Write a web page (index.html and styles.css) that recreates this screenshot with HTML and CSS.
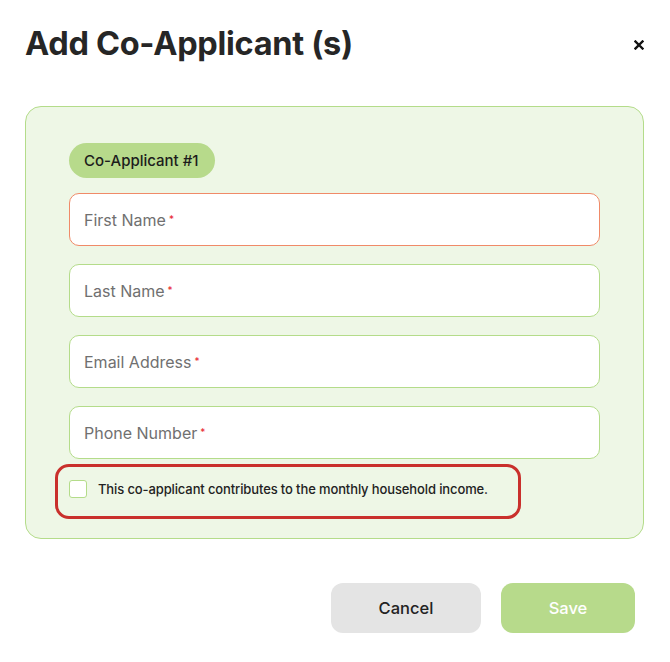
FILE: index.html
```html
<!DOCTYPE html>
<html>
<head>
<meta charset="utf-8">
<link rel="stylesheet" href="styles.css">
</head>
<body>
<div class="modal">
  <div class="header">
    <h1 class="title">Add Co-Applicant (s)</h1>
    <button class="close" aria-label="Close">
      <svg width="10" height="10" viewBox="0 0 10 10"><path d="M1.5 1.5 L8.5 8.5 M8.5 1.5 L1.5 8.5" stroke="#111" stroke-width="2.4" stroke-linecap="square"/></svg>
    </button>
  </div>
  <div class="card">
    <div class="badge">Co-Applicant #1</div>
    <div class="fields">
      <div class="field field-error"><span class="label">First Name</span><span class="req">*</span></div>
      <div class="field"><span class="label">Last Name</span><span class="req">*</span></div>
      <div class="field"><span class="label">Email Address</span><span class="req">*</span></div>
      <div class="field"><span class="label">Phone Number</span><span class="req">*</span></div>
    </div>
    <label class="check-row">
      <span class="checkbox"></span>
      <span class="check-text">This co-applicant contributes to the monthly household income.</span>
    </label>
  </div>
  <div class="actions">
    <button class="btn btn-cancel">Cancel</button>
    <button class="btn btn-save">Save</button>
  </div>
</div>
</body>
</html>
```
FILE: styles.css
```css
* { box-sizing: border-box; }
html, body { margin: 0; padding: 0; background: #fff; }
body { font-family: Inter, "Liberation Sans", sans-serif; color: #222; }
.modal { width: 670px; height: 662px; padding-top: 22px; }
.header { display: flex; align-items: center; justify-content: space-between; padding: 0 26px 0 25px; height: 44px; }
.title { margin: 0; font-size: 32.5px; line-height: 44px; font-weight: 700; color: #262626; letter-spacing: -0.3px; }
.close { border: 0; background: none; padding: 0; width: 10px; height: 10px; display: flex; margin-top: 2px; }
.card { margin: 40px 26px 0 25px; background: #eef7e6; border: 1px solid #b4dc8a; border-radius: 16px; padding: 36px 43px 19px 29px; }
.badge { display: inline-flex; align-items: center; height: 35px; padding: 0 16px 0 15px; margin-left: 14px; border-radius: 18px; background: #b7da8b; font-size: 15px; font-weight: 500; color: #1c1c1c; }
.fields { display: flex; flex-direction: column; gap: 18px; margin-top: 15px; margin-left: 14px; }
.field { height: 53px; background: #fff; border: 1px solid #b4dc8a; border-radius: 10px; display: flex; align-items: center; padding-left: 14px; }
.field-error { border-color: #f08a68; }
.label { font-size: 16px; color: #707070; }
.req { color: #e8232d; font-size: 10px; margin-left: 3px; position: relative; top: -1px; }
.check-row { display: inline-flex; align-items: center; margin-top: 5px; width: 466px; height: 55px; border: 3px solid #c9302c; border-radius: 14px; padding-left: 11px; padding-bottom: 6px; }
.checkbox { width: 18px; height: 18px; border: 1px solid #b4dc8a; border-radius: 3px; background: #fff; flex: none; }
.check-text { margin-left: 11px; font-size: 13px; font-weight: 500; color: #222; letter-spacing: -0.12px; }
.actions { display: flex; justify-content: flex-end; gap: 20px; margin-top: 44px; padding-right: 35px; }
.btn { height: 50px; border: 0; border-radius: 12px; font-family: Inter, "Liberation Sans", sans-serif; font-size: 16.5px; font-weight: 500; }
.btn-cancel { width: 150px; background: #e4e4e4; color: #222; }
.btn-save { width: 134px; background: #b7da8b; color: #fff; }
```
